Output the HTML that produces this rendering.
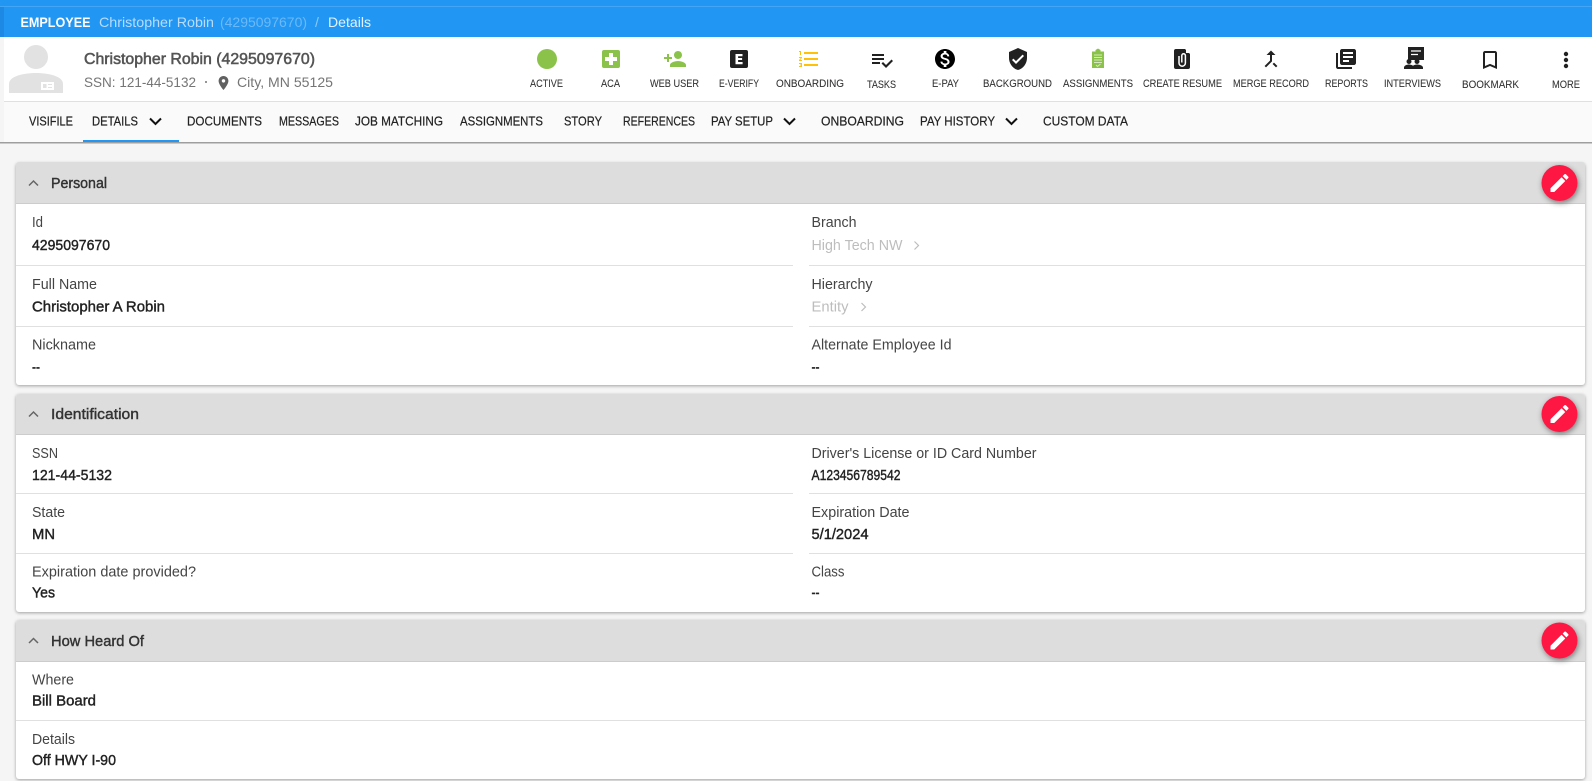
<!DOCTYPE html>
<html><head><meta charset="utf-8"><title>Employee Details</title>
<style>
html,body{margin:0;padding:0;width:1592px;height:781px;overflow:hidden;background:#f5f5f5}
svg{display:block;position:absolute;left:0;top:0}
text{font-family:"Liberation Sans",sans-serif;white-space:pre}
.bc{font-size:14px;fill:#fff}
.tb{font-size:11px;fill:#333;stroke:#333;stroke-width:.08}
.tab{font-size:12.5px;fill:#222;stroke:#222;stroke-width:.2}
.h{font-size:14.5px;fill:#333;stroke:#333;stroke-width:.4}
.l{font-size:14.5px;fill:#444}
.v{font-size:14.5px;fill:#222;stroke:#222;stroke-width:.4}
.d{font-size:14.5px;fill:#bdbdbd}
.card{fill:#fff;filter:drop-shadow(0 1px 1.5px rgba(0,0,0,.35))}
.fab{fill:#ff1744;filter:drop-shadow(1px 2px 3px rgba(0,0,0,.45))}
.div{fill:#e0e0e0}
</style></head><body>
<svg width="1592" height="781" viewBox="0 0 1592 781" xmlns="http://www.w3.org/2000/svg">
<rect width="1592" height="781" fill="#f5f5f5"/>
<!-- top bar -->
<rect width="1592" height="37" fill="#2196f3"/>
<rect y="6" width="1592" height="1" fill="#42a5f5"/>
<rect x="0" y="7" width="4" height="30" fill="#1e88e5"/>
<text class="bc" x="20.5" y="27" textLength="70" lengthAdjust="spacingAndGlyphs" font-weight="700">EMPLOYEE</text>
<text class="bc" x="99" y="27" textLength="115" lengthAdjust="spacingAndGlyphs" style="fill:#b9dcfb">Christopher Robin</text>
<text class="bc" x="220" y="27" textLength="87" lengthAdjust="spacingAndGlyphs" style="fill:#6cb9f7">(4295097670)</text>
<text class="bc" x="315" y="27" style="fill:#8fcaf8">/</text>
<text class="bc" x="328" y="27" textLength="43" lengthAdjust="spacingAndGlyphs" style="fill:#e3f2fd">Details</text>

<!-- header -->
<rect x="4" y="37" width="1588" height="64" fill="#fff"/>
<rect x="4" y="101" width="1588" height="41" fill="#fafafa"/>
<rect x="4" y="101" width="1588" height="1" fill="#e0e0e0"/>
<rect x="0" y="142" width="1592" height="1.5" fill="#9e9e9e"/>
<rect x="83" y="140" width="96" height="2" fill="#2196f3"/>
<!-- avatar -->
<circle cx="36" cy="57" r="12" fill="#e2e2e2"/>
<path d="M9 93V84C9 76 24 73 36 73S63 76 63 84V93Z" fill="#e2e2e2"/>
<rect x="41" y="82" width="13" height="8" fill="#fff"/><rect x="43" y="84" width="3.5" height="4" fill="#e2e2e2"/><rect x="48" y="84" width="4" height="1" fill="#e2e2e2"/><rect x="48" y="87" width="4" height="1" fill="#e2e2e2"/>
<text x="84" y="64" font-size="15.5" fill="#555" stroke="#555" stroke-width=".55" textLength="231" lengthAdjust="spacingAndGlyphs">Christopher Robin (4295097670)</text>
<text x="84" y="87" font-size="14" fill="#757575" textLength="112" lengthAdjust="spacingAndGlyphs">SSN: 121-44-5132</text>
<circle cx="206" cy="82" r="1" fill="#757575"/>
<path transform="translate(215.1 74.6) scale(.7)" fill="#616161" d="M12 2C8.13 2 5 5.13 5 9c0 5.25 7 13 7 13s7-7.75 7-13c0-3.87-3.13-7-7-7zm0 9.5c-1.38 0-2.5-1.12-2.5-2.5s1.12-2.5 2.5-2.5 2.5 1.12 2.5 2.5-1.12 2.5-2.5 2.5z"/>
<text x="237" y="87" font-size="14" fill="#757575" textLength="96" lengthAdjust="spacingAndGlyphs">City, MN 55125</text>

<!-- toolbar icons -->
<circle cx="547" cy="59" r="10" fill="#8bc34a"/>
<rect x="602" y="50" width="18" height="18" rx="2" fill="#8bc34a"/><path d="M609 53h4v4h4v4h-4v4h-4v-4h-4v-4h4z" fill="#fff"/>
<path transform="translate(663 47)" fill="#8bc34a" d="M15 12c2.21 0 4-1.79 4-4s-1.79-4-4-4-4 1.79-4 4 1.79 4 4 4zm-9-2V7H4v3H1v2h3v3h2v-3h3v-2H6zm9 4c-2.67 0-8 1.34-8 4v2h16v-2c0-2.66-5.33-4-8-4z"/>
<rect x="730" y="50" width="18" height="18" rx="2" fill="#212121"/><path d="M735.500 54h7v2.200h-4.400v1.800h4v2h-4v2h4.500v2.200h-7.100z" fill="#fff"/>
<path transform="translate(797 47)" fill="#ffc107" d="M2 17h2v.5H3v1h1v.5H2v1h3v-4H2v1zm1-9h1V4H2v1h1v3zm-1 3h1.800L2 13.100v.900h3v-1H3.200L5 10.900V10H2v1zm5-6v2h14V5H7zm0 14h14v-2H7v2zm0-6h14v-2H7v2z"/>
<path transform="translate(870 48)" fill="#212121" d="M14 10H2v2h12v-2zm0-4H2v2h12V6zM2 16h8v-2H2v2zm19.500-4.500L23 13l-6.990 7-4.510-4.500L13 14l3.010 3 5.490-5.500z"/>
<path transform="translate(933 47)" fill="#000" d="M12 2C6.480 2 2 6.480 2 12s4.480 10 10 10 10-4.480 10-10S17.520 2 12 2zm1.410 16.090V20h-2.670v-1.930c-1.710-.36-3.160-1.460-3.270-3.400h1.960c.1 1.050.82 1.870 2.650 1.870 1.960 0 2.400-.98 2.400-1.590 0-.83-.44-1.610-2.670-2.140-2.480-.6-4.180-1.620-4.180-3.670 0-1.720 1.390-2.840 3.110-3.210V4h2.670v1.950c1.860.45 2.790 1.860 2.850 3.390H14.300c-.05-1.110-.64-1.870-2.220-1.870-1.500 0-2.400.68-2.400 1.640 0 .84.65 1.390 2.670 1.910s4.180 1.390 4.180 3.910c-.01 1.830-1.380 2.830-3.120 3.160z"/>
<path transform="translate(1006 47)" fill="#212121" d="M12 1L3 5v6c0 5.550 3.840 10.740 9 12 5.160-1.260 9-6.450 9-12V5l-9-4zm-2 16l-4-4 1.410-1.410L10 14.170l6.590-6.590L18 9l-8 8z"/>
<!-- clipboard -->
<path d="M1092 51.500h3.500v-1.500l2.500-1.500 2.500 1.500v1.500h3.500V68h-12z" fill="#8bc34a"/>
<path d="M1094 55h8M1094 57.500h8M1094 60h8M1094 62.500h8" stroke="#d6e9bf" stroke-width="1"/>
<path d="M1096 65l1.500 1.500 3-2.500" stroke="#d6e9bf" stroke-width="1" fill="none"/>
<!-- file with clip -->
<path d="M1176 49h9l5 5v13a2 2 0 0 1-2 2h-12a2 2 0 0 1-2-2V51a2 2 0 0 1 2-2z" fill="#212121"/>
<path d="M1186 49.500l3.500 3.500h-3.500z" fill="#fff"/>
<path d="M1179 56v7a3.200 3.200 0 0 0 6.400 0V55.500a1.800 1.800 0 0 0-3.600 0v7" fill="none" stroke="#fff" stroke-width="1.500"/>
<path transform="translate(1259 47)" fill="#212121" d="M17 20.410L18.410 19 15 15.590 13.590 17 17 20.410zM7.500 8H11v5.590L5.590 19 7 20.410l6-6V8h3.500L12 3.500 7.500 8z"/>
<path transform="translate(1334 47)" fill="#212121" d="M4 6H2v14c0 1.100.9 2 2 2h14v-2H4V6zm16-4H8c-1.100 0-2 .9-2 2v12c0 1.100.9 2 2 2h12c1.100 0 2-.9 2-2V4c0-1.100-.9-2-2-2zm-1 9H9V9h10v2zm-4 4H9v-2h6v2zm4-8H9V5h10v2z"/>
<!-- interviews -->
<path d="M1408 47h16v13h-6l-3 2.500V60h-7z" fill="#212121"/>
<path d="M1411 51h10M1411 54.500h7" stroke="#fff" stroke-width="1.300"/>
<circle cx="1409" cy="61.500" r="2.500" fill="#212121"/><circle cx="1417" cy="61.500" r="2.500" fill="#212121"/>
<path d="M1404 69v-1.500c0-2 3-3 5-3 1.500 0 3 .5 4 1.200 1-.7 2.500-1.200 4-1.200 2 0 6 1 6 3V69z" fill="#212121"/>
<path transform="translate(1478 48)" fill="#212121" d="M17 3H7c-1.100 0-1.990.9-1.990 2L5 21l7-3 7 3V5c0-1.100-.9-2-2-2zm0 15l-5-2.180L7 18V5h10v13z"/>
<circle cx="1566" cy="54" r="2.200" fill="#212121"/><circle cx="1566" cy="60" r="2.200" fill="#212121"/><circle cx="1566" cy="66" r="2.200" fill="#212121"/>

<!-- toolbar labels -->
<text class="tb" x="530" y="87" textLength="33" lengthAdjust="spacingAndGlyphs">ACTIVE</text>
<text class="tb" x="601" y="87" textLength="19" lengthAdjust="spacingAndGlyphs">ACA</text>
<text class="tb" x="650" y="87" textLength="49" lengthAdjust="spacingAndGlyphs">WEB USER</text>
<text class="tb" x="719" y="87" textLength="40" lengthAdjust="spacingAndGlyphs">E-VERIFY</text>
<text class="tb" x="776" y="87" textLength="68" lengthAdjust="spacingAndGlyphs">ONBOARDING</text>
<text class="tb" x="867" y="88" textLength="29" lengthAdjust="spacingAndGlyphs">TASKS</text>
<text class="tb" x="932" y="87" textLength="27" lengthAdjust="spacingAndGlyphs">E-PAY</text>
<text class="tb" x="983" y="87" textLength="69" lengthAdjust="spacingAndGlyphs">BACKGROUND</text>
<text class="tb" x="1063" y="87" textLength="70" lengthAdjust="spacingAndGlyphs">ASSIGNMENTS</text>
<text class="tb" x="1143" y="87" textLength="79" lengthAdjust="spacingAndGlyphs">CREATE RESUME</text>
<text class="tb" x="1233" y="87" textLength="76" lengthAdjust="spacingAndGlyphs">MERGE RECORD</text>
<text class="tb" x="1325" y="87" textLength="43" lengthAdjust="spacingAndGlyphs">REPORTS</text>
<text class="tb" x="1384" y="87" textLength="57" lengthAdjust="spacingAndGlyphs">INTERVIEWS</text>
<text class="tb" x="1462" y="88" textLength="57" lengthAdjust="spacingAndGlyphs">BOOKMARK</text>
<text class="tb" x="1552" y="88" textLength="28" lengthAdjust="spacingAndGlyphs">MORE</text>

<!-- tabs -->
<text class="tab" x="29" y="125.500" textLength="44" lengthAdjust="spacingAndGlyphs">VISIFILE</text>
<text class="tab" x="92" y="125.500" textLength="46" lengthAdjust="spacingAndGlyphs">DETAILS</text>
<path d="M150 118.500l5.500 5.500 5.500-5.500" fill="none" stroke="#111" stroke-width="2"/>
<text class="tab" x="187" y="125.500" textLength="75" lengthAdjust="spacingAndGlyphs">DOCUMENTS</text>
<text class="tab" x="279" y="125.500" textLength="60" lengthAdjust="spacingAndGlyphs">MESSAGES</text>
<text class="tab" x="355" y="125.500" textLength="88" lengthAdjust="spacingAndGlyphs">JOB MATCHING</text>
<text class="tab" x="460" y="125.500" textLength="83" lengthAdjust="spacingAndGlyphs">ASSIGNMENTS</text>
<text class="tab" x="564" y="125.500" textLength="38" lengthAdjust="spacingAndGlyphs">STORY</text>
<text class="tab" x="623" y="125.500" textLength="72" lengthAdjust="spacingAndGlyphs">REFERENCES</text>
<text class="tab" x="711" y="125.500" textLength="62" lengthAdjust="spacingAndGlyphs">PAY SETUP</text>
<path d="M784 118.500l5.500 5.500 5.500-5.500" fill="none" stroke="#111" stroke-width="2"/>
<text class="tab" x="821" y="125.500" textLength="83" lengthAdjust="spacingAndGlyphs">ONBOARDING</text>
<text class="tab" x="920" y="125.500" textLength="75" lengthAdjust="spacingAndGlyphs">PAY HISTORY</text>
<path d="M1006 118.500l5.500 5.500 5.500-5.500" fill="none" stroke="#111" stroke-width="2"/>
<text class="tab" x="1043" y="125.500" textLength="85" lengthAdjust="spacingAndGlyphs">CUSTOM DATA</text>

<!-- Card 1 -->
<rect class="card" x="16" y="162.500" width="1569" height="222.500" rx="3"/>
<path d="M16 203v-38a3 3 0 0 1 3-3h1563a3 3 0 0 1 3 3v38z" fill="#ddd"/>
<rect x="16" y="203" width="1569" height="1" fill="#ccc"/>
<path d="M29 185.500l4.500-4.500 4.500 4.500" fill="none" stroke="#666" stroke-width="1.500"/>
<text class="h" x="51" y="188" textLength="56" lengthAdjust="spacingAndGlyphs">Personal</text>
<text class="l" x="32" y="227" textLength="11" lengthAdjust="spacingAndGlyphs">Id</text>
<text class="v" x="32" y="250" textLength="78" lengthAdjust="spacingAndGlyphs">4295097670</text>
<rect class="div" x="16" y="265" width="777" height="1"/><rect class="div" x="809" y="265" width="776" height="1"/>
<text class="l" x="32" y="289" textLength="65" lengthAdjust="spacingAndGlyphs">Full Name</text>
<text class="v" x="32" y="311.500" textLength="133" lengthAdjust="spacingAndGlyphs">Christopher A Robin</text>
<rect class="div" x="16" y="326" width="777" height="1"/><rect class="div" x="809" y="326" width="776" height="1"/>
<text class="l" x="32" y="349.500" textLength="64" lengthAdjust="spacingAndGlyphs">Nickname</text>
<text class="v" x="32" y="372" textLength="8" lengthAdjust="spacingAndGlyphs">--</text>
<text class="l" x="811.500" y="227" textLength="45" lengthAdjust="spacingAndGlyphs">Branch</text>
<text class="d" x="811.500" y="250" textLength="91" lengthAdjust="spacingAndGlyphs">High Tech NW</text>
<path d="M914.500 241.500l4 4-4 4" fill="none" stroke="#bdbdbd" stroke-width="1.200"/>
<text class="l" x="811.500" y="289" textLength="61" lengthAdjust="spacingAndGlyphs">Hierarchy</text>
<text class="d" x="811.500" y="311.500" textLength="37" lengthAdjust="spacingAndGlyphs">Entity</text>
<path d="M861.500 303l4 4-4 4" fill="none" stroke="#bdbdbd" stroke-width="1.200"/>
<text class="l" x="811.500" y="349.500" textLength="140" lengthAdjust="spacingAndGlyphs">Alternate Employee Id</text>
<text class="v" x="811.500" y="372" textLength="8" lengthAdjust="spacingAndGlyphs">--</text>

<!-- Card 2 -->
<rect class="card" x="16" y="394" width="1569" height="218" rx="3"/>
<path d="M16 434v-37a3 3 0 0 1 3-3h1563a3 3 0 0 1 3 3v37z" fill="#ddd"/>
<rect x="16" y="434" width="1569" height="1" fill="#ccc"/>
<path d="M29 416.500l4.500-4.500 4.500 4.500" fill="none" stroke="#666" stroke-width="1.500"/>
<text class="h" x="51" y="419" textLength="88" lengthAdjust="spacingAndGlyphs">Identification</text>
<text class="l" x="32" y="458" textLength="26" lengthAdjust="spacingAndGlyphs">SSN</text>
<text class="v" x="32" y="480" textLength="80" lengthAdjust="spacingAndGlyphs">121-44-5132</text>
<rect class="div" x="16" y="493" width="777" height="1"/><rect class="div" x="809" y="493" width="776" height="1"/>
<text class="l" x="32" y="517" textLength="33" lengthAdjust="spacingAndGlyphs">State</text>
<text class="v" x="32" y="539" textLength="23" lengthAdjust="spacingAndGlyphs">MN</text>
<rect class="div" x="16" y="553" width="777" height="1"/><rect class="div" x="809" y="553" width="776" height="1"/>
<text class="l" x="32" y="576.500" textLength="164" lengthAdjust="spacingAndGlyphs">Expiration date provided?</text>
<text class="v" x="32" y="597.500" textLength="23" lengthAdjust="spacingAndGlyphs">Yes</text>
<text class="l" x="811.500" y="458" textLength="225" lengthAdjust="spacingAndGlyphs">Driver's License or ID Card Number</text>
<text class="v" x="811.500" y="480" textLength="89" lengthAdjust="spacingAndGlyphs">A123456789542</text>
<text class="l" x="811.500" y="517" textLength="98" lengthAdjust="spacingAndGlyphs">Expiration Date</text>
<text class="v" x="811.500" y="539" textLength="57" lengthAdjust="spacingAndGlyphs">5/1/2024</text>
<text class="l" x="811.500" y="576.500" textLength="33" lengthAdjust="spacingAndGlyphs">Class</text>
<text class="v" x="811.500" y="597.500" textLength="8" lengthAdjust="spacingAndGlyphs">--</text>

<!-- Card 3 -->
<rect class="card" x="16" y="620" width="1569" height="159" rx="3"/>
<path d="M16 661v-38a3 3 0 0 1 3-3h1563a3 3 0 0 1 3 3v38z" fill="#ddd"/>
<rect x="16" y="661" width="1569" height="1" fill="#ccc"/>
<path d="M29 643l4.500-4.500 4.500 4.500" fill="none" stroke="#666" stroke-width="1.500"/>
<text class="h" x="51" y="646" textLength="93" lengthAdjust="spacingAndGlyphs">How Heard Of</text>
<text class="l" x="32" y="684.500" textLength="42" lengthAdjust="spacingAndGlyphs">Where</text>
<text class="v" x="32" y="705.500" textLength="64" lengthAdjust="spacingAndGlyphs">Bill Board</text>
<rect class="div" x="16" y="720" width="1569" height="1"/>
<text class="l" x="32" y="744" textLength="43" lengthAdjust="spacingAndGlyphs">Details</text>
<text class="v" x="32" y="765" textLength="84" lengthAdjust="spacingAndGlyphs">Off HWY I-90</text>

<!-- FABs -->
<circle class="fab" cx="1559.500" cy="183" r="18"/>
<path transform="translate(1547.500 171)" fill="#fff" d="M3 17.250V21h3.750L17.810 9.940l-3.750-3.750L3 17.250zM20.710 7.040c.39-.39.39-1.020 0-1.410l-2.340-2.340c-.39-.39-1.020-.39-1.410 0l-1.830 1.830 3.750 3.750 1.830-1.830z"/>
<circle class="fab" cx="1559.500" cy="414" r="18"/>
<path transform="translate(1547.500 402)" fill="#fff" d="M3 17.250V21h3.750L17.810 9.940l-3.750-3.750L3 17.250zM20.710 7.040c.39-.39.39-1.020 0-1.410l-2.340-2.340c-.39-.39-1.020-.39-1.410 0l-1.830 1.830 3.750 3.750 1.830-1.830z"/>
<circle class="fab" cx="1559.500" cy="640.500" r="18"/>
<path transform="translate(1547.500 628.500)" fill="#fff" d="M3 17.250V21h3.750L17.810 9.940l-3.750-3.750L3 17.250zM20.710 7.040c.39-.39.39-1.020 0-1.410l-2.340-2.340c-.39-.39-1.020-.39-1.410 0l-1.830 1.830 3.750 3.750 1.830-1.830z"/>
</svg>
</body></html>
